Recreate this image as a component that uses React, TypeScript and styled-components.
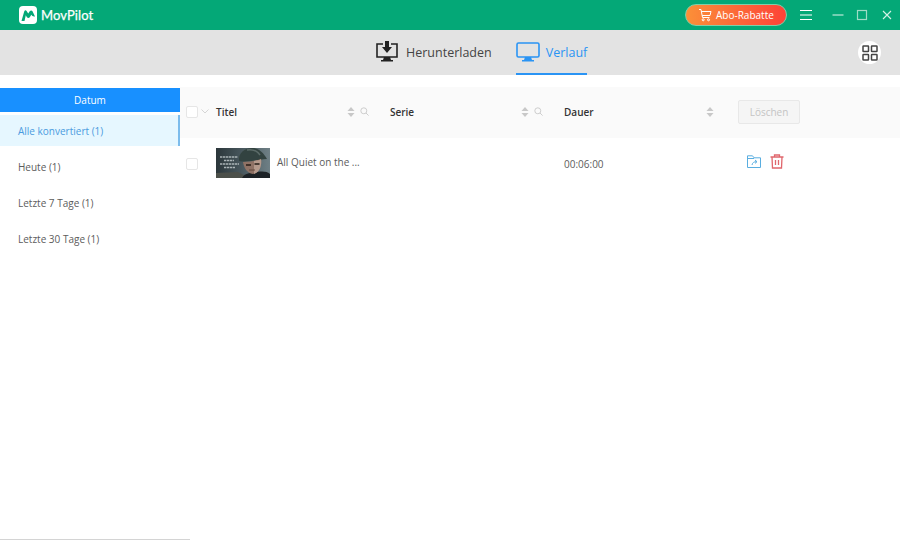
import React from "react";
import styled, { createGlobalStyle } from "styled-components";

const Global = createGlobalStyle`
  html, body { margin: 0; padding: 0; background: #fff; }
  body { font-family: "Open Sans", "Noto Sans", "Liberation Sans", sans-serif; }
  * { box-sizing: border-box; }
`;

const Page = styled.div`
  width: 900px;
  height: 540px;
  display: flex;
  flex-direction: column;
  overflow: hidden;
  background: #fff;
`;

const TitleBar = styled.header`
  height: 30px;
  flex: none;
  background: #04a877;
  display: flex;
  align-items: center;
  padding: 0 6px 0 19px;
  color: #fff;
`;

const Brand = styled.div`
  display: flex;
  align-items: center;
  gap: 4px;
  font-family: "Lato", "Open Sans", sans-serif;
  font-size: 13px;
  font-weight: 400;
  letter-spacing: 0.1px;
  -webkit-text-stroke: 0.25px #fff;
  flex: 1;
`;

const PromoButton = styled.button`
  width: 102px;
  height: 22px;
  border-radius: 11px;
  border: 1px solid #7fcfa8;
  background: linear-gradient(90deg, #fb9038, #fd4238);
  color: #fff;
  display: flex;
  align-items: center;
  gap: 4px;
  padding: 0 0 0 12px;
  font-family: inherit;
  font-size: 10px;
  margin-right: 12px;
`;

const WindowIcon = styled.span`
  display: flex;
  width: 14px;
  height: 14px;
  margin-left: ${(p: { $gap: number }) => p.$gap}px;
`;

const TabBar = styled.nav`
  height: 45px;
  flex: none;
  background: #e3e3e3;
  display: grid;
  grid-template-columns: 375px auto auto 1fr;
  align-items: stretch;
`;

const Tab = styled.div<{ $active?: boolean }>`
  grid-column: ${(p) => (p.$active ? 3 : 2)};
  display: flex;
  align-items: center;
  gap: ${(p) => (p.$active ? "6px" : "7px")};
  font-size: 12.5px;
  color: ${(p) => (p.$active ? "#2a94f4" : "#444")};
  margin-left: ${(p) => (p.$active ? "24px" : "0")};
  border-bottom: 2px solid ${(p) => (p.$active ? "#2a94f4" : "transparent")};
  padding-top: 1px;
`;

const GridButton = styled.div`
  justify-self: end;
  align-self: center;
  width: 23px;
  height: 23px;
  border-radius: 50%;
  background: #fff;
  margin-right: 19px;
  display: flex;
  align-items: center;
  justify-content: center;
`;

const Body = styled.main`
  flex: 1;
  display: flex;
  padding-top: 12px;
  min-height: 0;
`;

const Sidebar = styled.aside`
  width: 180px;
  flex: none;
  font-size: 10px;
`;

const SideHeader = styled.div`
  height: 24px;
  margin-top: 1px;
  background: #1890ff;
  color: #fff;
  display: flex;
  align-items: center;
  justify-content: center;
  margin-bottom: 3px;
`;

const SideItem = styled.div<{ $active?: boolean }>`
  height: ${(p) => (p.$active ? "31px" : "36px")};
  margin-bottom: ${(p) => (p.$active ? "3px" : "0")};
  display: flex;
  align-items: center;
  padding-left: 18px;
  color: ${(p) => (p.$active ? "#4a9be0" : "#5c5c5c")};
  background: ${(p) => (p.$active ? "#e6f7ff" : "transparent")};
  border-right: ${(p) => (p.$active ? "2px solid #7cbcec" : "none")};
`;

const Table = styled.section`
  flex: 1;
  min-width: 0;
  font-size: 10px;
`;

const Columns = styled.div`
  display: grid;
  grid-template-columns: 36px 174px 174px 174px 1fr;
  align-items: center;
`;

const HeaderRow = styled(Columns)`
  height: 51px;
  padding-bottom: 2px;
  background: #fafafa;
  color: #333;
  font-weight: 600;
`;

const DataRow = styled(Columns)`
  height: 51px;
  color: #5c5c5c;
`;

const CheckCell = styled.div`
  display: flex;
  align-items: center;
  gap: 3px;
  padding-left: 6px;
`;

const Check = styled.span`
  width: 12px;
  height: 12px;
  border: 1px solid #e6e6e6;
  border-radius: 2px;
  background: #fff;
  flex: none;
`;

const HeadCell = styled.div`
  display: flex;
  align-items: center;
  padding-right: 21px;
`;

const HeadLabel = styled.span`
  flex: 1;
`;

const SortWrap = styled.span<{ $end?: boolean }>`
  display: flex;
  align-items: center;
  gap: 5px;
  margin-right: ${(p) => (p.$end ? "3px" : "0")};
`;

const DeleteButton = styled.button`
  display: block;
  width: 62px;
  height: 24px;
  background: #f5f5f5;
  border: 1px solid #e8e8e8;
  border-radius: 2px;
  color: #c4c4c4;
  font-family: inherit;
  font-size: 10px;
  padding: 0;
`;

const MovieCell = styled.div`
  display: flex;
  align-items: center;
  gap: 7px;
  padding-bottom: 1px;
`;

const MovieTitle = styled.span`
  padding-bottom: 2px;
`;

const ActionCell = styled.div`
  display: flex;
  align-items: center;
  gap: 9px;
  padding: 0 0 5px 9px;
`;

const Duration = styled.div`
  padding-top: 1px;
`;

const BottomEdge = styled.div`
  flex: none;
  width: 190px;
  height: 1px;
  background: #d4d4d4;
`;

const Sort = () => (
  <svg width="8" height="12" viewBox="0 0 8 12">
    <path d="M4 1 7.500 5H.5Z M4 11 .5 7h7Z" fill="#c8c8c8" />
  </svg>
);

const Search = () => (
  <svg width="9" height="9" viewBox="0 0 9 9" fill="none" stroke="#c8c8c8" strokeWidth="0.9">
    <circle cx="3.800" cy="3.800" r="3" />
    <path d="M6 6l2.600 2.600" />
  </svg>
);

const Poster = () => (
  <svg width="54" height="30" viewBox="0 0 54 30">
    <defs>
      <linearGradient id="bg" x1="0" y1="0" x2="1" y2="0">
        <stop offset="0" stopColor="#2b363a" />
        <stop offset="0.45" stopColor="#46555b" />
        <stop offset="1" stopColor="#6f8086" />
      </linearGradient>
      <filter id="soft" x="-5%" y="-5%" width="110%" height="110%">
        <feGaussianBlur stdDeviation="0.6" />
      </filter>
    </defs>
    <rect width="54" height="30" fill="url(#bg)" />
    <g filter="url(#soft)">
      <path d="M0 25 L22 24 L34 30 H0Z" fill="#4b4f49" />
      <path d="M26 30 C29 25 33 25 38 25 C45 23 50 23 54 26 V30Z" fill="#1f2425" />
      <path d="M23 13 C22 5 29 0 36 0 C44 0 48 6 51 11 C44 11 32 15 23 13Z" fill="#33433f" />
      <path d="M31 2 C36 1 41 3 44 7" stroke="#5b6b69" strokeWidth="1.500" fill="none" />
      <path d="M27 14 C33 14 40 13 45 11 C46 17 44 24 37 26 C31 25 28 20 27 14Z" fill="#8f7265" />
      <path d="M38 13 C41 12.500 44 12 45 11 C46 17 44 24 38 26Z" fill="#b59a8c" />
      <path d="M30 17h5M38.500 16h5" stroke="#2a1f1a" strokeWidth="1.300" />
      <path d="M33 22h6" stroke="#5e4339" strokeWidth="0.900" />
    </g>
    <g stroke="#bfc7c9" strokeWidth="1.300" strokeDasharray="2.400 0.600" opacity="0.85">
      <path d="M4 9h18M8 12.500h10M4 16h19M8 19.500h11" />
    </g>
  </svg>
);

const Logo = () => (
  <svg width="18" height="18" viewBox="0 0 18 18">
    <rect width="18" height="18" rx="4" fill="#fff" />
    <path d="M2.500 15 L5.200 5.500 Q6.300 3.200 7.800 5.200 L9.200 7.500 L10.700 5.200 Q12.200 3.600 13.500 5.200 L16 10.500 Q13.300 11 12.300 8.800 L10.800 11.200 Q9.300 12.700 7.900 11.200 L6.800 9.300 L5.500 15Z" fill="#04a877" />
  </svg>
);

export default function App() {
  return (
    <Page>
      <Global />
      <TitleBar>
        <Brand>
          <Logo />
          MovPilot
        </Brand>
        <PromoButton>
          <svg width="14" height="14" viewBox="0 0 14 14" fill="none" stroke="#fff" strokeWidth="1">
            <path d="M1 1.500h2l1.500 8h7M3.400 3.500H13l-1 4H4.200" />
            <circle cx="5.200" cy="11.800" r="1" />
            <circle cx="10.500" cy="11.800" r="1" />
          </svg>
          Abo-Rabatte
        </PromoButton>
        <WindowIcon $gap={0}>
          <svg width="14" height="14" viewBox="0 0 14 14" stroke="#fff" strokeWidth="1.200">
            <path d="M1 2.500h12M1 7h12M1 11.500h12" />
          </svg>
        </WindowIcon>
        <WindowIcon $gap={18}>
          <svg width="14" height="14" viewBox="0 0 14 14" stroke="#bfe9da" strokeWidth="1.200">
            <path d="M1.500 7h11" />
          </svg>
        </WindowIcon>
        <WindowIcon $gap={10}>
          <svg width="14" height="14" viewBox="0 0 14 14" fill="none" stroke="#9fdcc6" strokeWidth="1.200">
            <rect x="2.500" y="2.500" width="9" height="9" />
          </svg>
        </WindowIcon>
        <WindowIcon $gap={11}>
          <svg width="14" height="14" viewBox="0 0 14 14" stroke="#d5f1e7" strokeWidth="1.100">
            <path d="M3 3l8 8M11 3l-8 8" />
          </svg>
        </WindowIcon>
      </TitleBar>
      <TabBar>
        <Tab>
          <svg width="24" height="22" viewBox="0 0 24 22" fill="none">
            <path d="M8 3H2v13h20V3h-6" stroke="#222" strokeWidth="1.600" />
            <path d="M10 0h4v6h3l-5 6-5-6h3Z" fill="#222" />
            <path d="M9 16h6l1 3h2v1.500H6V19h2Z" fill="#222" />
          </svg>
          Herunterladen
        </Tab>
        <Tab $active>
          <svg width="24" height="22" viewBox="0 0 24 22" fill="none">
            <rect x="1" y="2" width="22" height="14" rx="1.500" stroke="#2a94f4" strokeWidth="1.600" />
            <path d="M9 16h6l1 3h2v1.500H6V19h2Z" fill="#2a94f4" />
          </svg>
          Verlauf
        </Tab>
        <GridButton>
          <svg width="16" height="16" viewBox="0 0 16 16" fill="none" stroke="#444" strokeWidth="1.500">
            <rect x="1" y="1" width="5.500" height="5.500" rx="0.500" />
            <rect x="9.500" y="1" width="5.500" height="5.500" rx="0.500" />
            <rect x="1" y="9.500" width="5.500" height="5.500" rx="0.500" />
            <rect x="9.500" y="9.500" width="5.500" height="5.500" rx="0.500" />
          </svg>
        </GridButton>
      </TabBar>
      <Body>
        <Sidebar>
          <SideHeader>Datum</SideHeader>
          <SideItem $active>Alle konvertiert (1)</SideItem>
          <SideItem>Heute (1)</SideItem>
          <SideItem>Letzte 7 Tage (1)</SideItem>
          <SideItem>Letzte 30 Tage (1)</SideItem>
        </Sidebar>
        <Table>
          <HeaderRow>
            <CheckCell>
              <Check />
              <svg width="8" height="5" viewBox="0 0 8 5" fill="none" stroke="#d0d0d0" strokeWidth="0.900">
                <path d="M.5.5 4 4 7.500.5" />
              </svg>
            </CheckCell>
            <HeadCell>
              <HeadLabel>Titel</HeadLabel>
              <SortWrap>
                <Sort />
                <Search />
              </SortWrap>
            </HeadCell>
            <HeadCell>
              <HeadLabel>Serie</HeadLabel>
              <SortWrap>
                <Sort />
                <Search />
              </SortWrap>
            </HeadCell>
            <HeadCell>
              <HeadLabel>Dauer</HeadLabel>
              <SortWrap $end>
                <Sort />
              </SortWrap>
            </HeadCell>
            <div>
              <DeleteButton>Löschen</DeleteButton>
            </div>
          </HeaderRow>
          <DataRow>
            <CheckCell>
              <Check />
            </CheckCell>
            <MovieCell>
              <Poster />
              <MovieTitle>All Quiet on the ...</MovieTitle>
            </MovieCell>
            <div />
            <Duration>00:06:00</Duration>
            <ActionCell>
              <svg width="14" height="13" viewBox="0 0 14 13" fill="none" stroke="#5aaee0" strokeWidth="1">
                <path d="M.5 12.500V.8h5l1.500 2h6.500v9.700Z" />
                <path d="M.5 3.500h6.500" />
                <path d="M5 10c.5-2.500 2-3.300 4.500-3.300M8 5l2 1.700L8 8.400" />
              </svg>
              <svg width="14" height="15" viewBox="0 0 14 15" fill="none" stroke="#e0666c" strokeWidth="1.300">
                <path d="M.5 3h13M4.500 3V1h5v2M2 3l.5 11h9L12 3" />
                <path d="M5.500 6v5M8.500 6v5" />
              </svg>
            </ActionCell>
          </DataRow>
        </Table>
      </Body>
      <BottomEdge />
    </Page>
  );
}
